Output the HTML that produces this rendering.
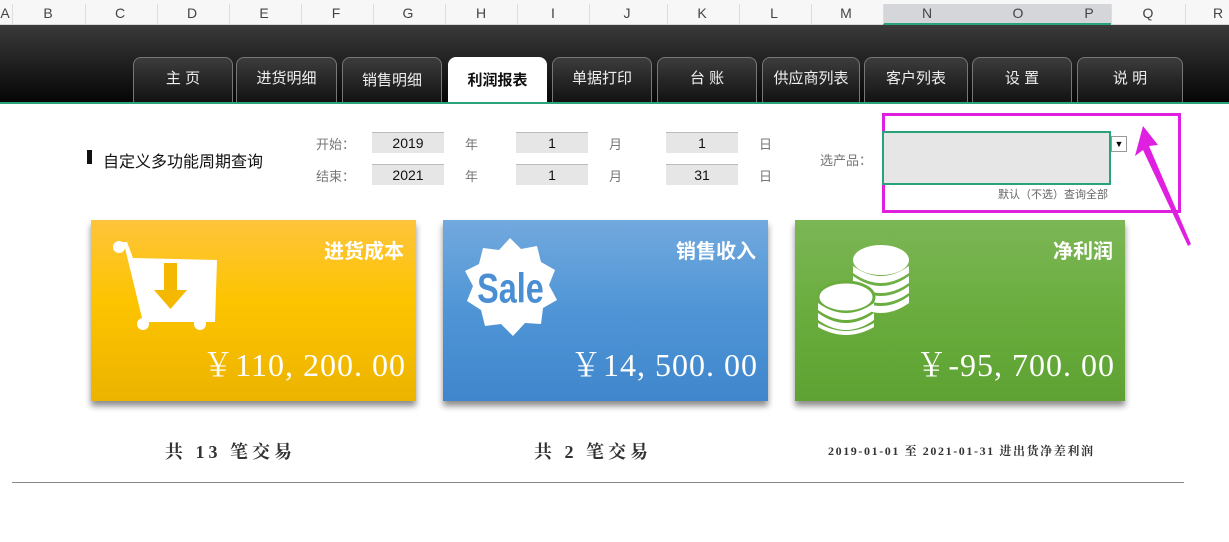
<!DOCTYPE html>
<html><head><meta charset="utf-8"><style>
*{margin:0;padding:0;box-sizing:border-box}
body{width:1229px;height:542px;overflow:hidden;background:#fff;position:relative;font-family:"Liberation Sans","Microsoft YaHei","Noto Sans CJK SC",sans-serif}
.a{position:absolute}
.hdr{left:0;top:0;width:1229px;height:25px;background:#f7f7f7;border-bottom:1px solid #d8d8d8}
.hdr span{position:absolute;top:5px;font-size:14px;color:#444;transform:translateX(-50%)}
.hdr i{position:absolute;top:4px;width:1px;height:20px;background:#ddd}
.band{left:0;top:25px;width:1229px;height:78px;background:linear-gradient(#3a3a3a,#1a1a1a 60%,#050505)}
.tab{position:absolute;top:57px;height:46px;border:1px solid #777;border-bottom:none;border-radius:8px 8px 0 0;background:linear-gradient(#3c3c3c,#111);color:#eee;font-size:15px;text-align:center;line-height:42px}
.tab.on{background:#fff;color:#111;font-weight:bold;border-color:#fff}
.gl{left:0;top:102px;width:1229px;height:2px;background:#2aa37a}
.lbl{font-size:13px;color:#777}
.box{position:absolute;height:21px;background:#e6e6e6;border-top:1px solid #bbb;font-size:14px;text-align:center;line-height:21px;color:#111}
.card{position:absolute;top:220px;height:181px;box-shadow:0 5px 6px rgba(0,0,0,.45);color:#fff}
.card .t{position:absolute;right:12px;top:15px;font-size:20px;font-weight:bold}
.card .v{position:absolute;right:10px;top:120px;font-size:32px;letter-spacing:1px;font-family:"Liberation Serif","Noto Serif CJK SC",serif}
.bt{position:absolute;top:438px;font-family:"Liberation Serif","Noto Serif CJK SC",serif;font-size:18px;color:#333;font-weight:bold;letter-spacing:4px}
</style></head><body>
<div class="a hdr">
<span style="left:5px">A</span><span style="left:48px">B</span><span style="left:120px">C</span><span style="left:192px">D</span><span style="left:264px">E</span><span style="left:336px">F</span><span style="left:408px">G</span><span style="left:481px">H</span><span style="left:553px">I</span><span style="left:627px">J</span><span style="left:702px">K</span><span style="left:774px">L</span><span style="left:846px">M</span>
<div style="position:absolute;left:883px;top:4px;width:228px;height:21px;background:#d4d6da;border-bottom:2px solid #2aa37a"></div>
<span style="left:927px">N</span><span style="left:1018px">O</span><span style="left:1089px">P</span><span style="left:1148px">Q</span><span style="left:1218px">R</span>
<i style="left:12px"></i><i style="left:85px"></i><i style="left:157px"></i><i style="left:229px"></i><i style="left:301px"></i><i style="left:373px"></i><i style="left:445px"></i><i style="left:517px"></i><i style="left:589px"></i><i style="left:667px"></i><i style="left:739px"></i><i style="left:811px"></i><i style="left:883px"></i><i style="left:1111px"></i><i style="left:1185px"></i>
</div>
<div class="a band"></div>
<div class="tab" style="left:133px;width:100px">主 页</div>
<div class="tab" style="left:236px;width:101px">进货明细</div>
<div class="tab" style="left:342px;width:100px;line-height:46px">销售明细</div>
<div class="tab on" style="left:448px;width:99px;line-height:46px">利润报表</div>
<div class="tab" style="left:552px;width:100px">单据打印</div>
<div class="tab" style="left:657px;width:100px">台 账</div>
<div class="tab" style="left:762px;width:98px">供应商列表</div>
<div class="tab" style="left:864px;width:104px">客户列表</div>
<div class="tab" style="left:972px;width:100px">设 置</div>
<div class="tab" style="left:1077px;width:106px">说 明</div>
<div class="a gl"></div>

<div class="a" style="left:87px;top:150px;width:5px;height:14px;background:#111"></div>
<div class="a" style="left:103px;top:148px;font-size:16px;color:#111">自定义多功能周期查询</div>
<div class="a lbl" style="left:316px;top:134px">开始：</div>
<div class="a lbl" style="left:316px;top:166px">结束：</div>
<div class="box" style="left:372px;top:132px;width:72px">2019</div>
<div class="box" style="left:372px;top:164px;width:72px">2021</div>
<div class="a lbl" style="left:465px;top:134px">年</div><div class="a lbl" style="left:465px;top:166px">年</div>
<div class="box" style="left:516px;top:132px;width:72px">1</div>
<div class="box" style="left:516px;top:164px;width:72px">1</div>
<div class="a lbl" style="left:609px;top:134px">月</div><div class="a lbl" style="left:609px;top:166px">月</div>
<div class="box" style="left:666px;top:132px;width:72px">1</div>
<div class="box" style="left:666px;top:164px;width:72px">31</div>
<div class="a lbl" style="left:759px;top:134px">日</div><div class="a lbl" style="left:759px;top:166px">日</div>

<div class="a lbl" style="left:820px;top:150px">选产品：</div>
<div class="a" style="left:882px;top:113px;width:299px;height:100px;border:3px solid #e020e0"></div>
<div class="a" style="left:882px;top:131px;width:229px;height:54px;background:#e6e6e6;border:2px solid #2aa37a"></div>
<div class="a" style="left:1111px;top:136px;width:16px;height:16px;background:#fff;border:1px solid #999;font-size:9px;text-align:center;line-height:15px">▼</div>
<div class="a" style="left:998px;top:186px;font-size:11px;color:#666">默认（不选）查询全部</div>
<svg class="a" style="left:1125px;top:120px" width="70" height="130"><path d="M18 6 L10 36 L18 30 L63 126 L66 124 L24 26 L33 25 Z" fill="#e020e0"/></svg>

<div class="card" style="left:91px;width:325px;background:linear-gradient(#fec43c,#fdc400 45%,#ecb300)">
<svg class="a" style="left:22px;top:18px" width="110" height="95"><circle cx="6" cy="9" r="6" fill="#fff"/><path d="M4 4 L14 4 L20 20 L104 22 L102 84 L30 84 L12 10 Z" fill="#fff"/><circle cx="30" cy="86" r="6" fill="#fff"/><circle cx="87" cy="86" r="6" fill="#fff"/><path d="M51 25 h13 v27 h10 l-16.5 19 l-16.5 -19 h10 z" fill="#f5b800"/></svg>
<div class="t">进货成本</div><div class="v">￥110, 200. 00</div></div>

<div class="card" style="left:443px;width:325px;background:linear-gradient(#72a9de,#4f95d6 50%,#3f86cc)">
<svg class="a" style="left:18px;top:18px" width="100" height="100"><polygon fill="#fff" points="49,0 60,11 76,8 80,24 94,32 88,47 96,62 82,70 80,86 64,85 52,98 40,86 24,88 20,72 6,63 12,48 4,33 18,26 22,10 38,12"/><text x="50" y="66" font-family="Liberation Sans Narrow,Liberation Sans,sans-serif" font-weight="bold" font-size="36" fill="#4a8fd3" text-anchor="middle" transform="scale(0.9,1.15) translate(5,-10)">Sale</text></svg>
<div class="t">销售收入</div><div class="v">￥14, 500. 00</div></div>

<div class="card" style="left:795px;width:330px;background:linear-gradient(#7cb656,#6aad3e 50%,#5da232)">
<svg class="a" style="left:22px;top:22px" width="100" height="95">
<g fill="#fff"><ellipse cx="64" cy="18" rx="28" ry="15"/><path d="M36 24 q28 20 56 0 v7 q-28 20 -56 0z"/><path d="M36 34 q28 20 56 0 v7 q-28 20 -56 0z"/><path d="M36 44 q28 20 56 0 v7 q-28 20 -56 0z"/><path d="M36 54 q28 20 56 0 v7 q-28 20 -56 0z"/>
<ellipse cx="29" cy="55" rx="28" ry="15" stroke="#6aad3e" stroke-width="3"/><path d="M1 61 q28 20 56 0 v7 q-28 20 -56 0z"/><path d="M1 71 q28 20 56 0 v7 q-28 20 -56 0z"/><path d="M1 81 q28 16 56 0 v4 q-28 16 -56 0z"/></g></svg>
<div class="t">净利润</div><div class="v">￥-95, 700. 00</div></div>

<div class="bt" style="left:165px">共 13 笔交易</div>
<div class="bt" style="left:534px">共 2 笔交易</div>
<div class="bt" style="left:828px;top:442px;font-size:12px;letter-spacing:1.6px">2019-01-01 至 2021-01-31 进出货净差利润</div>
<div class="a" style="left:12px;top:482px;width:1172px;height:1px;background:#888"></div>
</body></html>
